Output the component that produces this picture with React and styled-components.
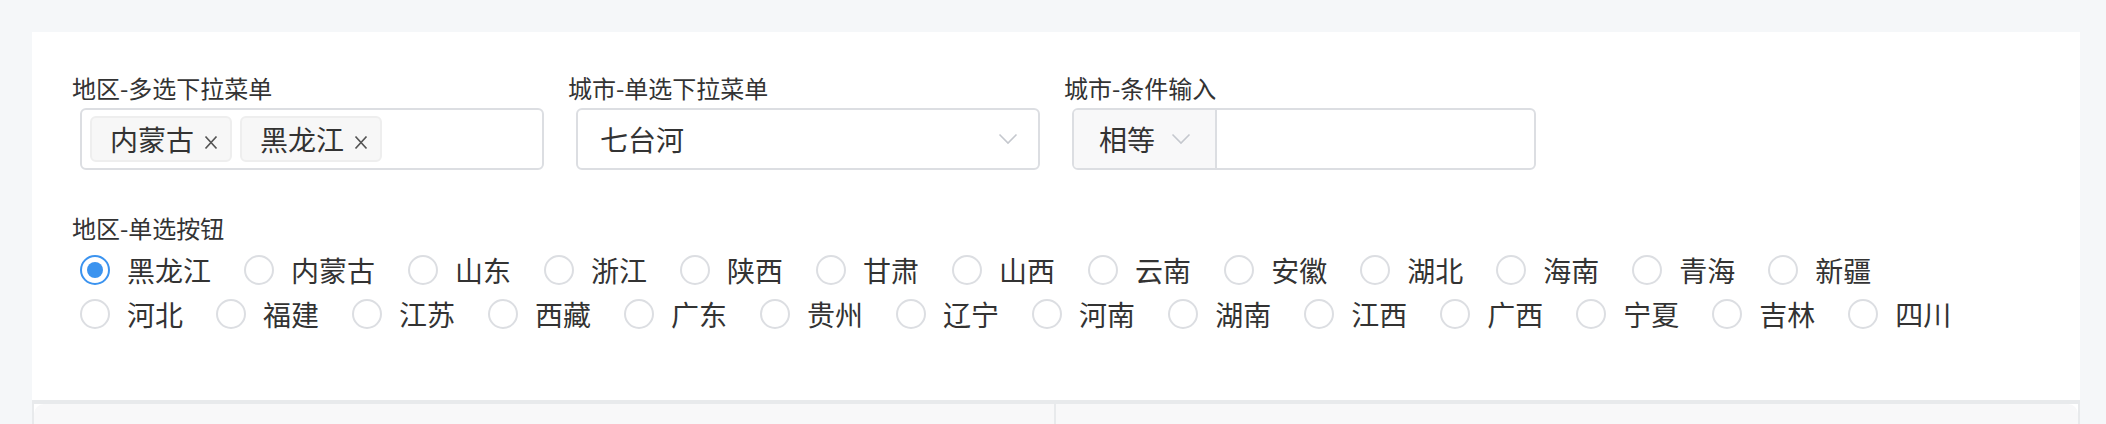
import React from 'react'
import styled, { createGlobalStyle } from 'styled-components'

const GlobalStyle = createGlobalStyle`
  html, body {
    margin: 0;
    padding: 0;
    background: #f5f7f9;
  }
  body {
    font-family: "Noto Sans CJK SC", "Noto Sans", sans-serif;
    color: #333;
  }
`

const Page = styled.div`
  box-sizing: border-box;
  height: 424px;
  overflow: hidden;
  padding: 32px 26px 0 32px;
`

const Panel = styled.div`
  background: #fff;
`

const FormArea = styled.div`
  padding: 40px 40px 64px;
`

const FieldRow = styled.div`
  display: flex;
`

const Field = styled.div`
  margin-right: 24px;
`

const Label = styled.div`
  font-size: 24px;
  line-height: 32px;
  height: 32px;
  margin-bottom: 4px;
  white-space: nowrap;
  color: #333;
`

const Control = styled.div`
  margin-left: 8px;
  width: 464px;
`

const Box = styled.div`
  box-sizing: border-box;
  height: 62px;
  border: 2px solid #dcdee2;
  border-radius: 6px;
  background: #fff;
  display: flex;
  align-items: center;
  overflow: hidden;
  font-size: 28px;
  color: #333;
`

const MultiBox = styled(Box)`
  padding: 0 8px;
  gap: 8px;
`

const Tag = styled.div`
  box-sizing: border-box;
  height: 46px;
  display: flex;
  align-items: center;
  padding: 0 12px 0 18px;
  background: #f7f7f7;
  border: 2px solid #eeeeee;
  border-radius: 6px;
  font-size: 28px;
  line-height: 1;
`

const Close = styled.svg`
  margin-left: 10px;
  margin-top: 6px;
`

const SingleBox = styled(Box)`
  padding: 0 20px 0 22px;
  justify-content: space-between;
`

const CondBox = styled(Box)``

const CondSelect = styled.div`
  box-sizing: border-box;
  width: 143px;
  height: 100%;
  display: flex;
  align-items: center;
  padding-left: 25px;
  background: #f8f8f9;
  border-right: 2px solid #dcdee2;
`

const CondInput = styled.div`
  flex: 1;
  height: 100%;
`

const Chevron = styled.svg`
  margin-left: ${p => p.$gap || 0}px;
  flex-shrink: 0;
`

const RadioSection = styled.div`
  margin-top: 42px;
`

const RadioGroup = styled.div`
  margin-left: 8px;
  display: flex;
  flex-wrap: wrap;
`

const RadioItem = styled.label`
  height: 44px;
  display: flex;
  align-items: center;
  margin-right: 33px;
  font-size: 28px;
  line-height: 1;
  color: #333;
  white-space: nowrap;
`

const Circle = styled.span`
  box-sizing: border-box;
  width: 30px;
  height: 30px;
  border-radius: 50%;
  border: 2px solid ${p => (p.$checked ? '#3b93ef' : '#dcdee2')};
  margin-right: 17px;
  display: flex;
  align-items: center;
  justify-content: center;
  background: #fff;
  &::after {
    content: '';
    display: ${p => (p.$checked ? 'block' : 'none')};
    width: 16px;
    height: 16px;
    border-radius: 50%;
    background: #3b93ef;
  }
`

const Table = styled.div`
  display: flex;
  height: 40px;
  border-top: 4px solid #e8eaec;
  border-left: 2px solid #e8eaec;
  border-right: 2px solid #e8eaec;
  background: #fff;
`

const Cell = styled.div`
  flex: ${p => (p.$first ? '0 0 1020px' : '1')};
  background: #f8f8f9;
  border-right: ${p => (p.$first ? '2px solid #e8eaec' : 'none')};
  border-top-left-radius: ${p => (p.$first ? '10px' : '0')};
  border-top-right-radius: ${p => (p.$first ? '0' : '10px')};
`

const ChevronIcon = ({ gap }) => (
  <Chevron $gap={gap} width="20" height="12" viewBox="0 0 20 12">
    <path d="M1.5 1.5 L10 10 L18.5 1.5" fill="none" stroke="#c5c8ce" strokeWidth="1.6" />
  </Chevron>
)

const CloseIcon = () => (
  <Close width="14" height="15" viewBox="0 0 14 15">
    <path d="M1.5 1.5 L12.5 13.5 M12.5 1.5 L1.5 13.5" stroke="#555" strokeWidth="1.7" fill="none" />
  </Close>
)

const row1 = ['黑龙江', '内蒙古', '山东', '浙江', '陕西', '甘肃', '山西', '云南', '安徽', '湖北', '海南', '青海', '新疆']
const row2 = ['河北', '福建', '江苏', '西藏', '广东', '贵州', '辽宁', '河南', '湖南', '江西', '广西', '宁夏', '吉林', '四川']

const App = () => {
  const regions = [...row1, ...row2]

  return (
    <Page>
      <GlobalStyle />
      <Panel>
        <FormArea>
          <FieldRow>
            <Field>
              <Label>地区-多选下拉菜单</Label>
              <Control>
                <MultiBox>
                  <Tag>内蒙古<CloseIcon /></Tag>
                  <Tag>黑龙江<CloseIcon /></Tag>
                </MultiBox>
              </Control>
            </Field>
            <Field>
              <Label>城市-单选下拉菜单</Label>
              <Control>
                <SingleBox>
                  <span>七台河</span>
                  <ChevronIcon />
                </SingleBox>
              </Control>
            </Field>
            <Field>
              <Label>城市-条件输入</Label>
              <Control>
                <CondBox>
                  <CondSelect>
                    <span>相等</span>
                    <ChevronIcon gap={16} />
                  </CondSelect>
                  <CondInput />
                </CondBox>
              </Control>
            </Field>
          </FieldRow>

          <RadioSection>
            <Label>地区-单选按钮</Label>
            <RadioGroup>
              {regions.map((name, i) => (
                <RadioItem key={name}>
                  <Circle $checked={i === 0} />
                  {name}
                </RadioItem>
              ))}
            </RadioGroup>
          </RadioSection>
        </FormArea>
        <Table>
          <Cell $first />
          <Cell />
        </Table>
      </Panel>
    </Page>
  )
}

export default App
